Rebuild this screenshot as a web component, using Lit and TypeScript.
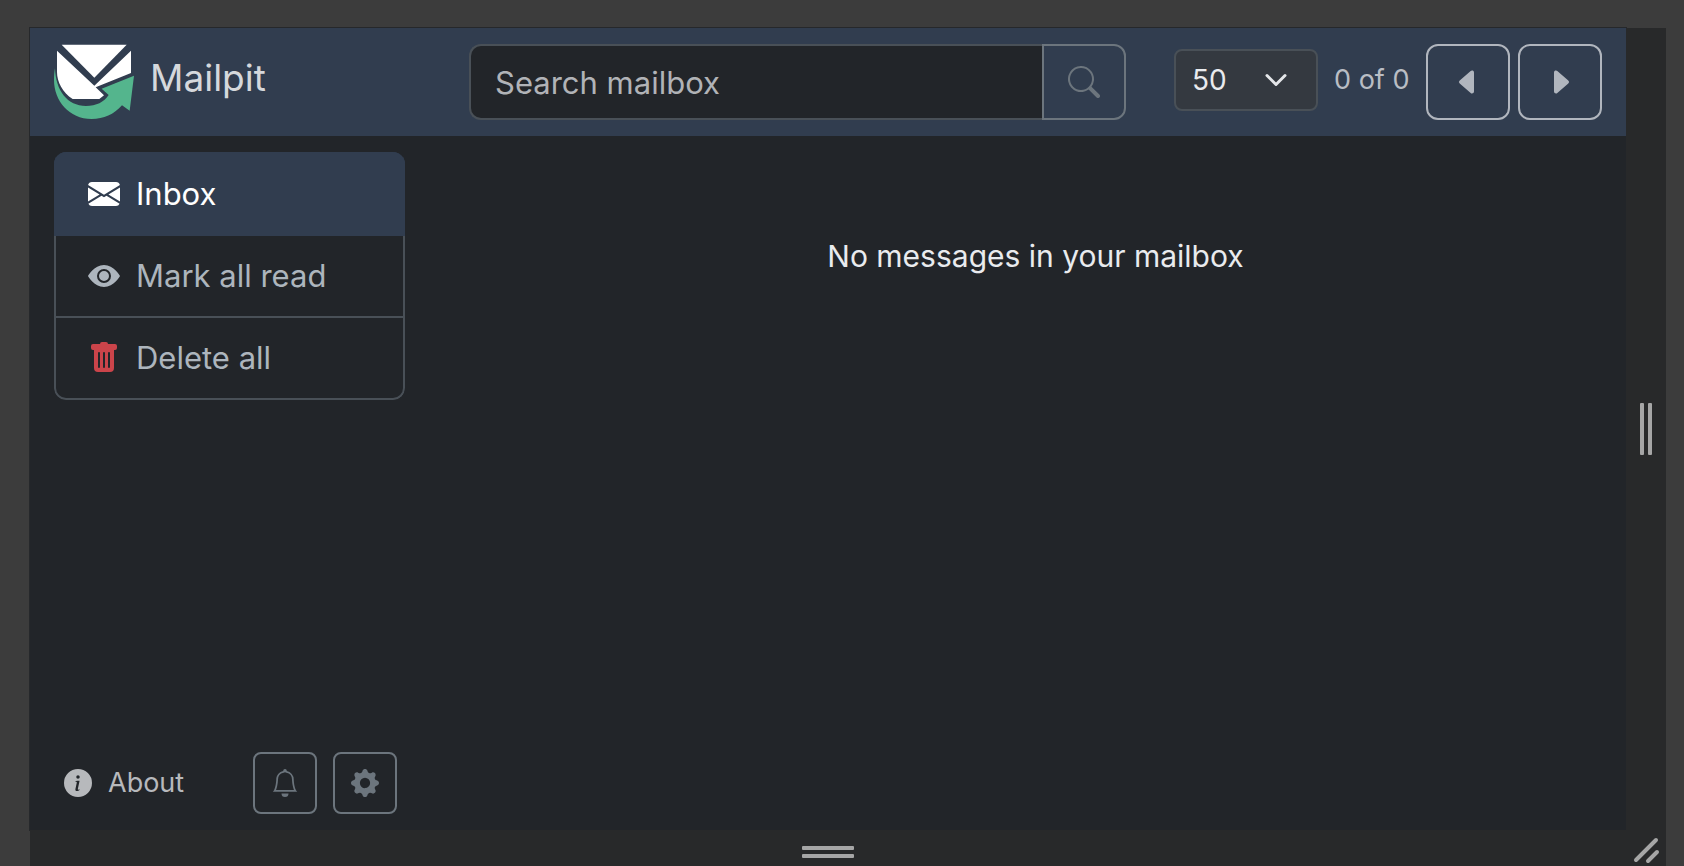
import { LitElement, html, css, svg } from "lit";
import { customElement, property, state } from "lit/decorators.js";

const ICONS: Record<string, string[]> = {
  envelope: [
    "M.05 3.555A2 2 0 0 1 2 2h12a2 2 0 0 1 1.95 1.555L8 8.414zM0 4.697v7.104l5.803-3.558zM6.761 8.83l-6.57 4.027A2 2 0 0 0 2 14h12a2 2 0 0 0 1.808-1.144l-6.57-4.027L8 9.586zm3.436-.586L16 11.801V4.697z",
  ],
  eye: [
    "M10.5 8a2.5 2.5 0 1 1-5 0 2.5 2.5 0 0 1 5 0",
    "M0 8s3-5.5 8-5.5S16 8 16 8s-3 5.5-8 5.5S0 8 0 8m8 3.5a3.5 3.5 0 1 0 0-7 3.5 3.5 0 0 0 0 7",
  ],
  trash: [
    "M2.5 1a1 1 0 0 0-1 1v1a1 1 0 0 0 1 1H3v9a2 2 0 0 0 2 2h6a2 2 0 0 0 2-2V4h.5a1 1 0 0 0 1-1V2a1 1 0 0 0-1-1H10a1 1 0 0 0-1-1H7a1 1 0 0 0-1 1zm3 4a.5.5 0 0 1 .5.5v7a.5.5 0 0 1-1 0v-7a.5.5 0 0 1 .5-.5M8 5a.5.5 0 0 1 .5.5v7a.5.5 0 0 1-1 0v-7A.5.5 0 0 1 8 5m3 .5v7a.5.5 0 0 1-1 0v-7a.5.5 0 0 1 1 0",
  ],
  info: [
    "M8 16A8 8 0 1 0 8 0a8 8 0 0 0 0 16m.93-9.412-1 4.705c-.07.34.029.533.304.533.194 0 .487-.07.686-.246l-.088.416c-.287.346-.92.598-1.465.598-.703 0-1.002-.422-.808-1.319l.738-3.468c.064-.293.006-.399-.287-.47l-.451-.081.082-.381 2.29-.287zM8 5.5a1 1 0 1 1 0-2 1 1 0 0 1 0 2",
  ],
  bell: [
    "M8 16a2 2 0 0 0 2-2H6a2 2 0 0 0 2 2M8 1.918l-.797.161A4 4 0 0 0 4 6c0 .628-.134 2.197-.459 3.742-.16.767-.376 1.566-.663 2.258h10.244c-.287-.692-.502-1.49-.663-2.258C12.134 8.197 12 6.628 12 6a4 4 0 0 0-3.203-3.92zM14.22 12c.223.447.481.801.78 1H1c.299-.199.557-.553.78-1C2.68 10.2 3 6.88 3 6c0-2.42 1.72-4.44 4.005-4.901a1 1 0 1 1 1.99 0A5 5 0 0 1 13 6c0 .88.32 4.2 1.22 6",
  ],
  gear: [
    "M9.405 1.05c-.413-1.4-2.397-1.4-2.81 0l-.1.34a1.464 1.464 0 0 1-2.105.872l-.31-.17c-1.283-.698-2.686.705-1.987 1.987l.169.311c.446.82.023 1.841-.872 2.105l-.34.1c-1.4.413-1.4 2.397 0 2.81l.34.1a1.464 1.464 0 0 1 .872 2.105l-.17.31c-.698 1.283.705 2.686 1.987 1.987l.311-.169a1.464 1.464 0 0 1 2.105.872l.1.34c.413 1.4 2.397 1.4 2.81 0l.1-.34a1.464 1.464 0 0 1 2.105-.872l.31.17c1.283.698 2.686-.705 1.987-1.987l-.169-.311a1.464 1.464 0 0 1 .872-2.105l.34-.1c1.4-.413 1.4-2.397 0-2.81l-.34-.1a1.464 1.464 0 0 1-.872-2.105l.17-.31c.698-1.283-.705-2.686-1.987-1.987l-.311.169a1.464 1.464 0 0 1-2.105-.872zM8 10.93a2.929 2.929 0 1 1 0-5.86 2.929 2.929 0 0 1 0 5.858z",
  ],
  search: [
    "M11.742 10.344a6.5 6.5 0 1 0-1.397 1.398h-.001q.044.06.098.115l3.85 3.85a1 1 0 0 0 1.415-1.414l-3.85-3.85a1 1 0 0 0-.115-.1zM12 6.5a5.5 5.5 0 1 1-11 0 5.5 5.5 0 0 1 11 0",
  ],
  left: [
    "m3.86 8.753 5.482 4.796c.646.566 1.658.106 1.658-.753V3.204a1 1 0 0 0-1.659-.753l-5.48 4.796a1 1 0 0 0 0 1.506z",
  ],
  right: [
    "m12.14 8.753-5.482 4.796c-.646.566-1.658.106-1.658-.753V3.204a1 1 0 0 1 1.659-.753l5.48 4.796a1 1 0 0 1 0 1.506z",
  ],
};

@customElement("ui-icon")
class UiIcon extends LitElement {
  @property() name = "";

  static styles = css`
    :host {
      display: block;
      flex: none;
      width: 32px;
      height: 32px;
    }
    svg {
      display: block;
      width: 100%;
      height: 100%;
      fill: currentColor;
    }
  `;

  render() {
    return html`<svg viewBox="0 0 16 16" aria-hidden="true">
      ${(ICONS[this.name] ?? []).map((d) => svg`<path d=${d}></path>`)}
    </svg>`;
  }
}

@customElement("app-root")
class AppRoot extends LitElement {
  @state() private query = "";

  static styles = css`
    :host {
      display: block;
      font-family: Inter, "Liberation Sans", sans-serif;
      font-size: 31px;
      line-height: 48px;
      color: #dee2e6;
    }
    * {
      box-sizing: border-box;
    }
    button,
    input,
    select {
      font: inherit;
      margin: 0;
    }
    .viewport {
      display: grid;
      grid-template-columns: minmax(0, 1fr) 40px;
      grid-template-rows: minmax(0, 1fr) 36px;
      height: 100vh;
      padding: 28px 18px 0 30px;
      overflow: hidden;
      background: #3c3c3c;
    }
    .page {
      display: flex;
      flex-direction: column;
      background: #222529;
      box-shadow: 0 0 0 1px #26282b;
    }
    .navbar {
      display: flex;
      align-items: center;
      padding: 16px 0;
      background: #313d4f;
    }
    .brand-col {
      flex: none;
      width: 25%;
      padding-left: 24px;
    }
    .brand {
      display: flex;
      gap: 16px;
      color: #d5d8dc;
      font-size: 37px;
      line-height: 68px;
      text-decoration: none;
    }
    .logo {
      width: 80px;
      height: 76px;
    }
    .search {
      display: flex;
      flex: 1;
      min-width: 0;
      margin: 0 48px 0 40px;
    }
    .search-box {
      flex: 1;
      min-width: 0;
      height: 76px;
      padding: 0 24px;
      border: 2px solid #495057;
      border-right: 0;
      border-radius: 12px 0 0 12px;
      background: #222529;
      color: #dee2e6;
      outline: none;
    }
    .search-box::placeholder {
      color: #b1b3b7;
      opacity: 1;
    }
    .square {
      display: grid;
      place-items: center;
      flex: none;
      padding: 0;
      border: 2px solid #6c757d;
      background: transparent;
      color: #6c757d;
    }
    .large {
      width: 84px;
      height: 76px;
      border-radius: 12px;
    }
    .go {
      border-radius: 0 12px 12px 0;
    }
    .light {
      border-color: #b1b6be;
      color: #b1b6be;
    }
    .small {
      width: 64px;
      height: 62px;
      border-radius: 8px;
    }
    .small ui-icon,
    .about ui-icon {
      width: 28px;
      height: 28px;
    }
    .pager {
      display: flex;
      gap: 8px;
      margin-right: 24px;
    }
    .limit {
      display: grid;
      align-self: flex-start;
      align-items: center;
      width: 144px;
      margin: 5px 8px 0 0;
    }
    .limit select,
    .limit svg {
      grid-area: 1 / 1;
    }
    .limit select {
      width: 100%;
      height: 62px;
      padding: 0 48px 0 16px;
      border: 2px solid #495057;
      border-radius: 8px;
      appearance: none;
      background: #343940;
      color: #e9ebee;
      font-size: 28px;
      outline: none;
    }
    .limit svg {
      justify-self: end;
      width: 24px;
      height: 24px;
      margin-right: 30px;
      pointer-events: none;
    }
    .count {
      width: 76px;
      margin-right: 8px;
      color: #b9bdc4;
      font-size: 27px;
      line-height: 72px;
      white-space: nowrap;
    }
    .body {
      display: flex;
      flex: 1;
      min-height: 0;
    }
    .sidebar {
      display: flex;
      flex-direction: column;
      justify-content: space-between;
      flex: none;
      width: 25%;
      padding: 16px 24px;
    }
    .menu {
      display: flex;
      flex-direction: column;
      border-radius: 12px;
      overflow: hidden;
    }
    .item {
      display: flex;
      align-items: center;
      gap: 16px;
      height: 82px;
      padding: 0 32px;
      border: 2px solid #495057;
      border-top: 0;
      background: transparent;
      color: #adb5bd;
      text-align: left;
      text-decoration: none;
    }
    .item:last-child {
      border-radius: 0 0 12px 12px;
    }
    .active {
      height: 84px;
      border: 2px solid #313d4f;
      background: #313d4f;
      color: #ffffff;
    }
    .danger {
      color: #cb444a;
    }
    .tools {
      display: flex;
      align-items: center;
      gap: 16px;
      padding-right: 8px;
    }
    .about {
      display: flex;
      align-items: center;
      gap: 16px;
      margin-right: auto;
      padding: 0 10px;
      border: 0;
      background: transparent;
      color: #b7b9bc;
      font-size: 27px;
    }
    .messages {
      flex: 1;
      padding: 96px 0 0 16px;
      color: #e9ebee;
      font-size: 30px;
      text-align: center;
    }
    .messages p {
      margin: 0;
    }
    .edge {
      display: flex;
      justify-content: center;
      gap: 4px;
      background: #28292a;
    }
    .edge-right {
      align-items: center;
    }
    .edge-right span {
      width: 4px;
      height: 52px;
      border-radius: 1px;
      background: #a6a6a6;
    }
    .edge-bottom {
      flex-direction: column;
      align-items: center;
      justify-content: flex-start;
      padding-top: 16px;
    }
    .edge-bottom span {
      width: 52px;
      height: 4px;
      border-radius: 1px;
      background: #a6a6a6;
    }
    .corner svg {
      width: 40px;
      height: 36px;
    }
  `;

  render() {
    return html`
      <div class="viewport">
        <div class="page">
          <header class="navbar">
            <div class="brand-col">
              <a class="brand" href="#">
                <svg class="logo" viewBox="162 132 240 228" aria-hidden="true">
                  <path fill="#fff" d="M185 134H380L283 233z" />
                  <path
                    fill="#fff"
                    d="M171 152 283 257 393 152V219L287 262 312 286 298 297H218C188 278 171 246 171 216z"
                  />
                  <path
                    fill="#54b58d"
                    d="M165 205C167 272 202 318 258 318C289 318 312 306 326 285L305 266 402 227 389 332 366 316C341 344 312 357 275 357C207 357 162 302 162 240C162 227 163 215 165 205z"
                  />
                </svg>
                <span>Mailpit</span>
              </a>
            </div>
            <form class="search" @submit=${(e: Event) => e.preventDefault()}>
              <input
                class="search-box"
                type="text"
                aria-label="Search mailbox"
                placeholder="Search mailbox"
                .value=${this.query}
                @input=${(e: Event) => (this.query = (e.target as HTMLInputElement).value)}
              />
              <button class="square large go" type="submit" aria-label="Search">
                <ui-icon name="search"></ui-icon>
              </button>
            </form>
            <div class="pager">
              <div class="limit">
                <select aria-label="Messages per page">
                  <option>25</option>
                  <option selected>50</option>
                  <option>100</option>
                  <option>200</option>
                </select>
                <svg viewBox="0 0 16 16" aria-hidden="true">
                  <path
                    d="m2 5 6 6 6-6"
                    fill="none"
                    stroke="#e4e6e9"
                    stroke-width="2"
                    stroke-linecap="round"
                    stroke-linejoin="round"
                  />
                </svg>
              </div>
              <span class="count">0 of 0</span>
              <button class="square large light" aria-label="Previous page">
                <ui-icon name="left"></ui-icon>
              </button>
              <button class="square large light" aria-label="Next page">
                <ui-icon name="right"></ui-icon>
              </button>
            </div>
          </header>
          <div class="body">
            <aside class="sidebar">
              <nav class="menu">
                <a class="item active" href="#"><ui-icon name="envelope"></ui-icon>Inbox</a>
                <button class="item"><ui-icon name="eye"></ui-icon>Mark all read</button>
                <button class="item">
                  <ui-icon class="danger" name="trash"></ui-icon>Delete all
                </button>
              </nav>
              <div class="tools">
                <button class="about"><ui-icon name="info"></ui-icon>About</button>
                <button class="square small" aria-label="Notifications">
                  <ui-icon name="bell"></ui-icon>
                </button>
                <button class="square small" aria-label="Settings">
                  <ui-icon name="gear"></ui-icon>
                </button>
              </div>
            </aside>
            <main class="messages"><p>No messages in your mailbox</p></main>
          </div>
        </div>
        <div class="edge edge-right"><span></span><span></span></div>
        <div class="edge edge-bottom"><span></span><span></span></div>
        <div class="edge corner">
          <svg viewBox="0 0 40 36" aria-hidden="true">
            <path
              d="M10 30 30 10M22 31 31 22"
              stroke="#a6a6a6"
              stroke-width="4"
              stroke-linecap="round"
            />
          </svg>
        </div>
      </div>
    `;
  }
}
